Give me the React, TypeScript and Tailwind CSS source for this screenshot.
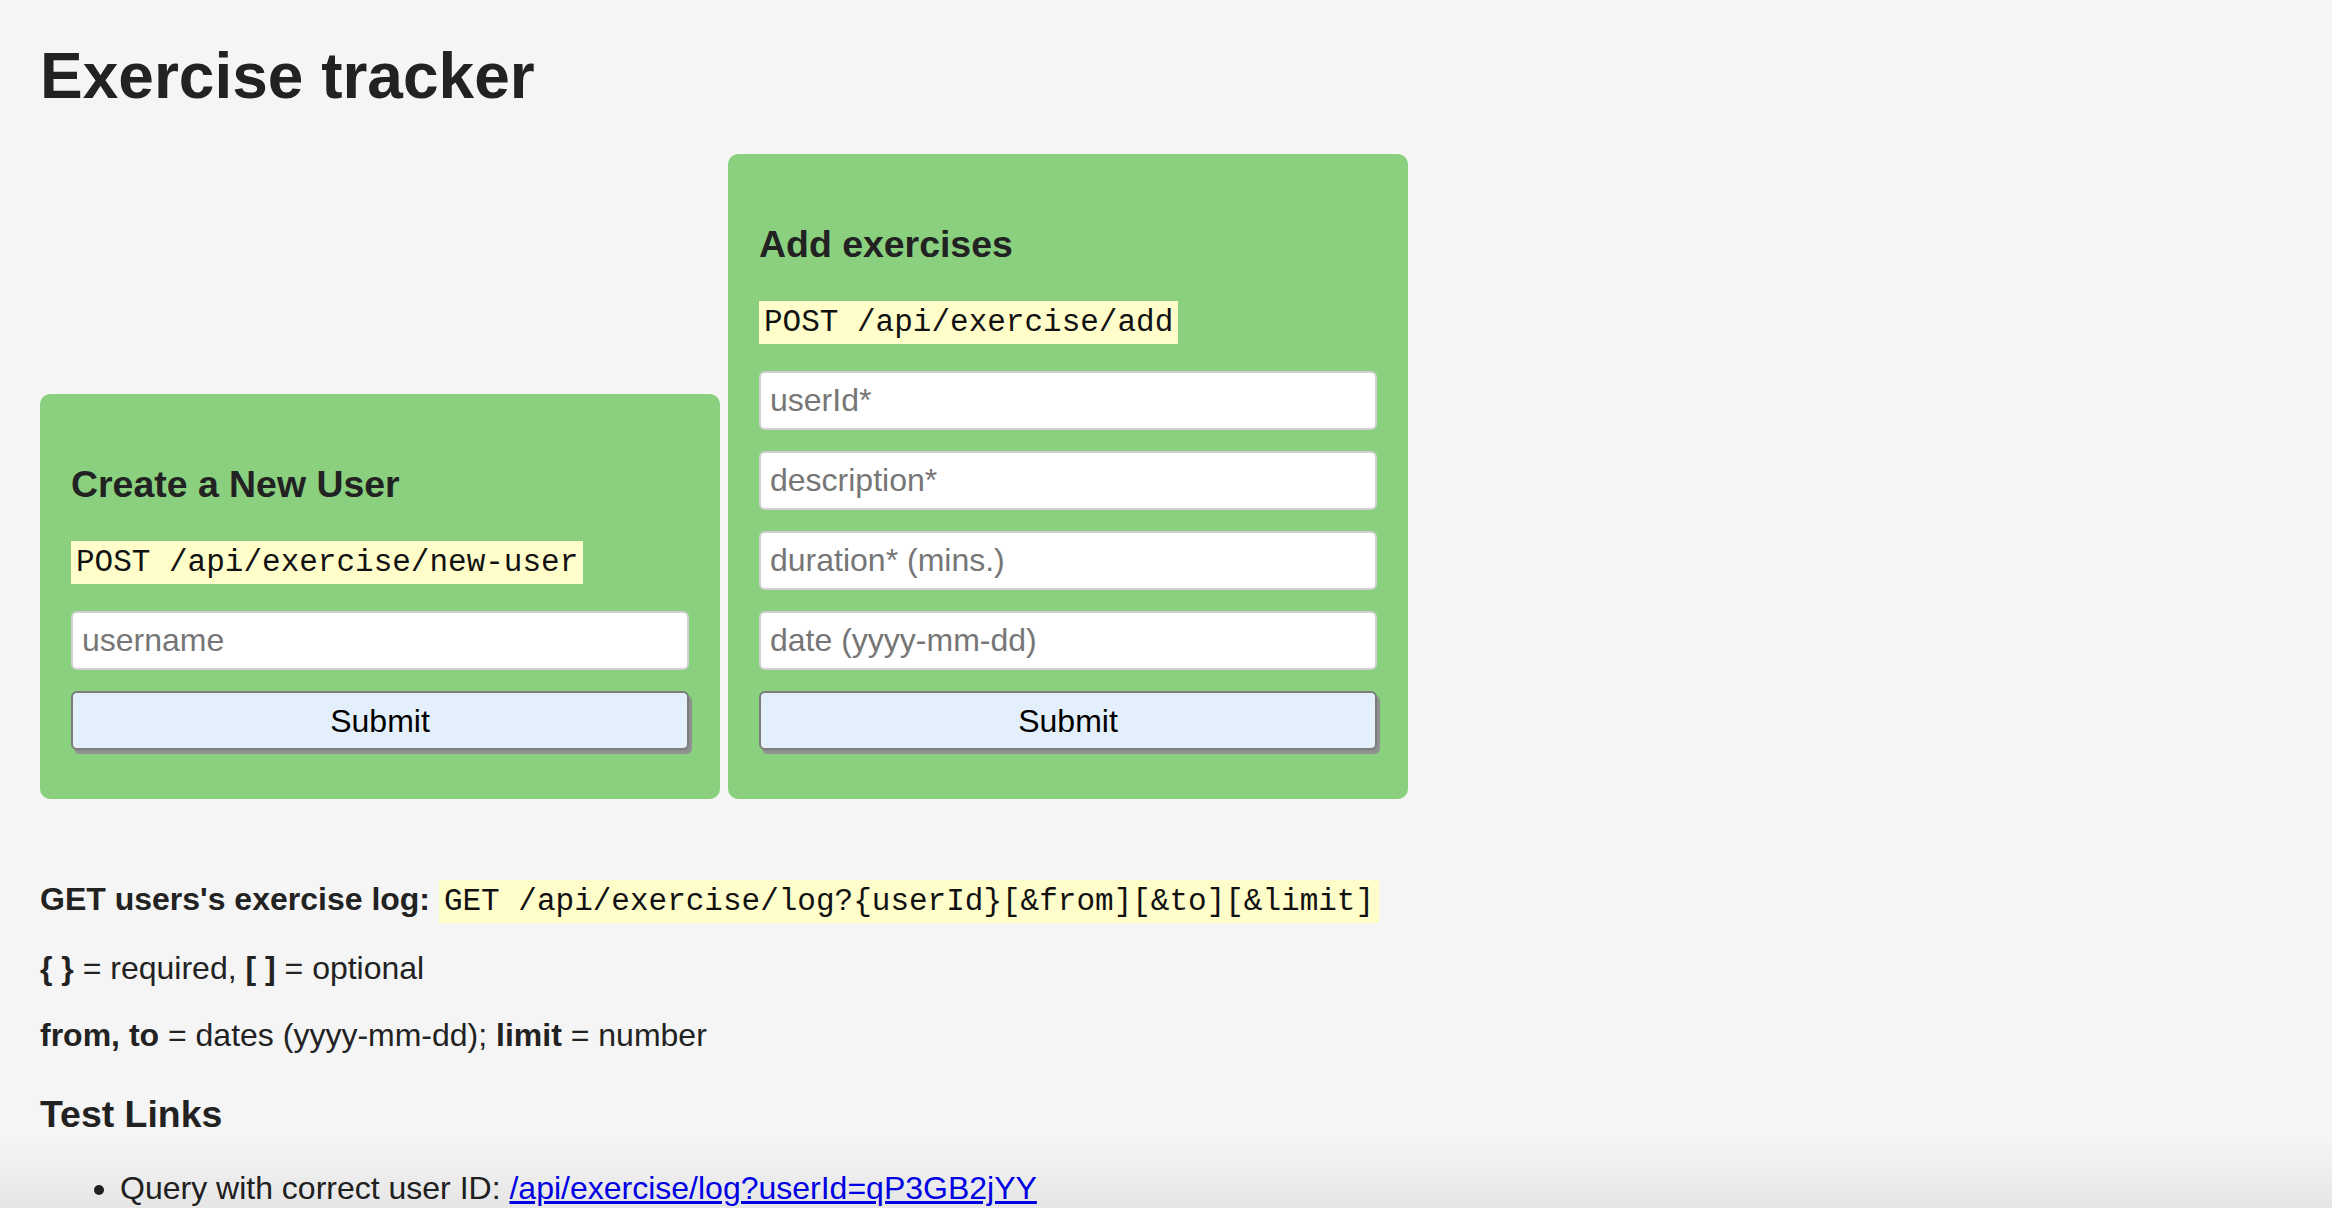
import React from "react";

const Code = ({ children }: { children: React.ReactNode }) => {
  return (
    <code className="bg-[#fffdca] px-[5px] py-[4px] font-['Liberation_Mono','Courier_New',monospace] text-[31px] text-[#111]">
      {children}
    </code>
  );
};

const CardCode = ({ children }: { children: React.ReactNode }) => {
  return (
    <div className="mt-[35px] flex">
      <code className="block h-[43px] bg-[#fffdca] px-[5px] font-['Liberation_Mono','Courier_New',monospace] text-[31px] leading-[44px] text-[#111]">
        {children}
      </code>
    </div>
  );
};

const Field = ({ placeholder }: { placeholder: string }) => {
  return (
    <input
      type="text"
      placeholder={placeholder}
      className="h-[59px] w-full rounded-[6px] border-2 border-[#d0d0d0] bg-white px-[9px] text-[32px] text-[#222] placeholder:text-[#767676] outline-none"
    />
  );
};

const SubmitButton = () => {
  return (
    <button className="h-[59px] w-full rounded-[6px] border-2 border-[#7d7d7d] bg-[#e3effb] text-[32px] text-black shadow-[3px_4px_1px_#8f8f8f]">
      Submit
    </button>
  );
};

const Card = ({
  title,
  endpoint,
  fields,
}: {
  title: string;
  endpoint: string;
  fields: string[];
}) => {
  return (
    <div className="w-[680px] rounded-[10px] bg-[#8ad07f] px-[31px] pt-[69px] pb-[49px]">
      <h3 className="text-[37.44px] font-bold leading-[43px] text-[#222]">
        {title}
      </h3>
      <CardCode>{endpoint}</CardCode>
      <form
        className="mt-[27px] flex flex-col gap-[21px]"
        onSubmit={(e) => e.preventDefault()}
      >
        {fields.map((f) => (
          <Field key={f} placeholder={f} />
        ))}
        <SubmitButton />
      </form>
    </div>
  );
};

export default function App() {
  return (
    <div className="min-h-screen bg-[#f5f5f5] px-[40px] pt-[39px] pb-[40px] font-['Liberation_Sans',Arial,sans-serif] text-[32px] text-[#222]">
      <h1 className="text-[64px] font-bold leading-[74px]">Exercise tracker</h1>

      <div className="mt-[41px] flex items-end gap-[8px]">
        <Card
          title="Create a New User"
          endpoint="POST /api/exercise/new-user"
          fields={["username"]}
        />
        <Card
          title="Add exercises"
          endpoint="POST /api/exercise/add"
          fields={[
            "userId*",
            "description*",
            "duration* (mins.)",
            "date (yyyy-mm-dd)",
          ]}
        />
      </div>

      <div className="mt-[83px] flex flex-col gap-[32px] leading-[35px]">
        <p>
          <b>GET users's exercise log:</b>{" "}
          <Code>GET /api/exercise/log?{"{userId}"}[&amp;from][&amp;to][&amp;limit]</Code>
        </p>
        <p>
          <b>{"{ }"}</b> = required, <b>[ ]</b> = optional
        </p>
        <p>
          <b>from, to</b> = dates (yyyy-mm-dd); <b>limit</b> = number
        </p>
      </div>

      <h3 className="mt-[40px] text-[37.44px] font-bold leading-[43px]">
        Test Links
      </h3>
      <ul className="mt-[35px] list-disc pl-[80px] leading-[35px]">
        <li>
          Query with correct user ID:{" "}
          <a href="#" className="text-[#0000ee] underline">
            /api/exercise/log?userId=qP3GB2jYY
          </a>
        </li>
      </ul>

      <div className="pointer-events-none fixed inset-x-0 bottom-0 h-[70px] bg-linear-to-b from-black/0 to-black/[0.06]" />
    </div>
  );
}
